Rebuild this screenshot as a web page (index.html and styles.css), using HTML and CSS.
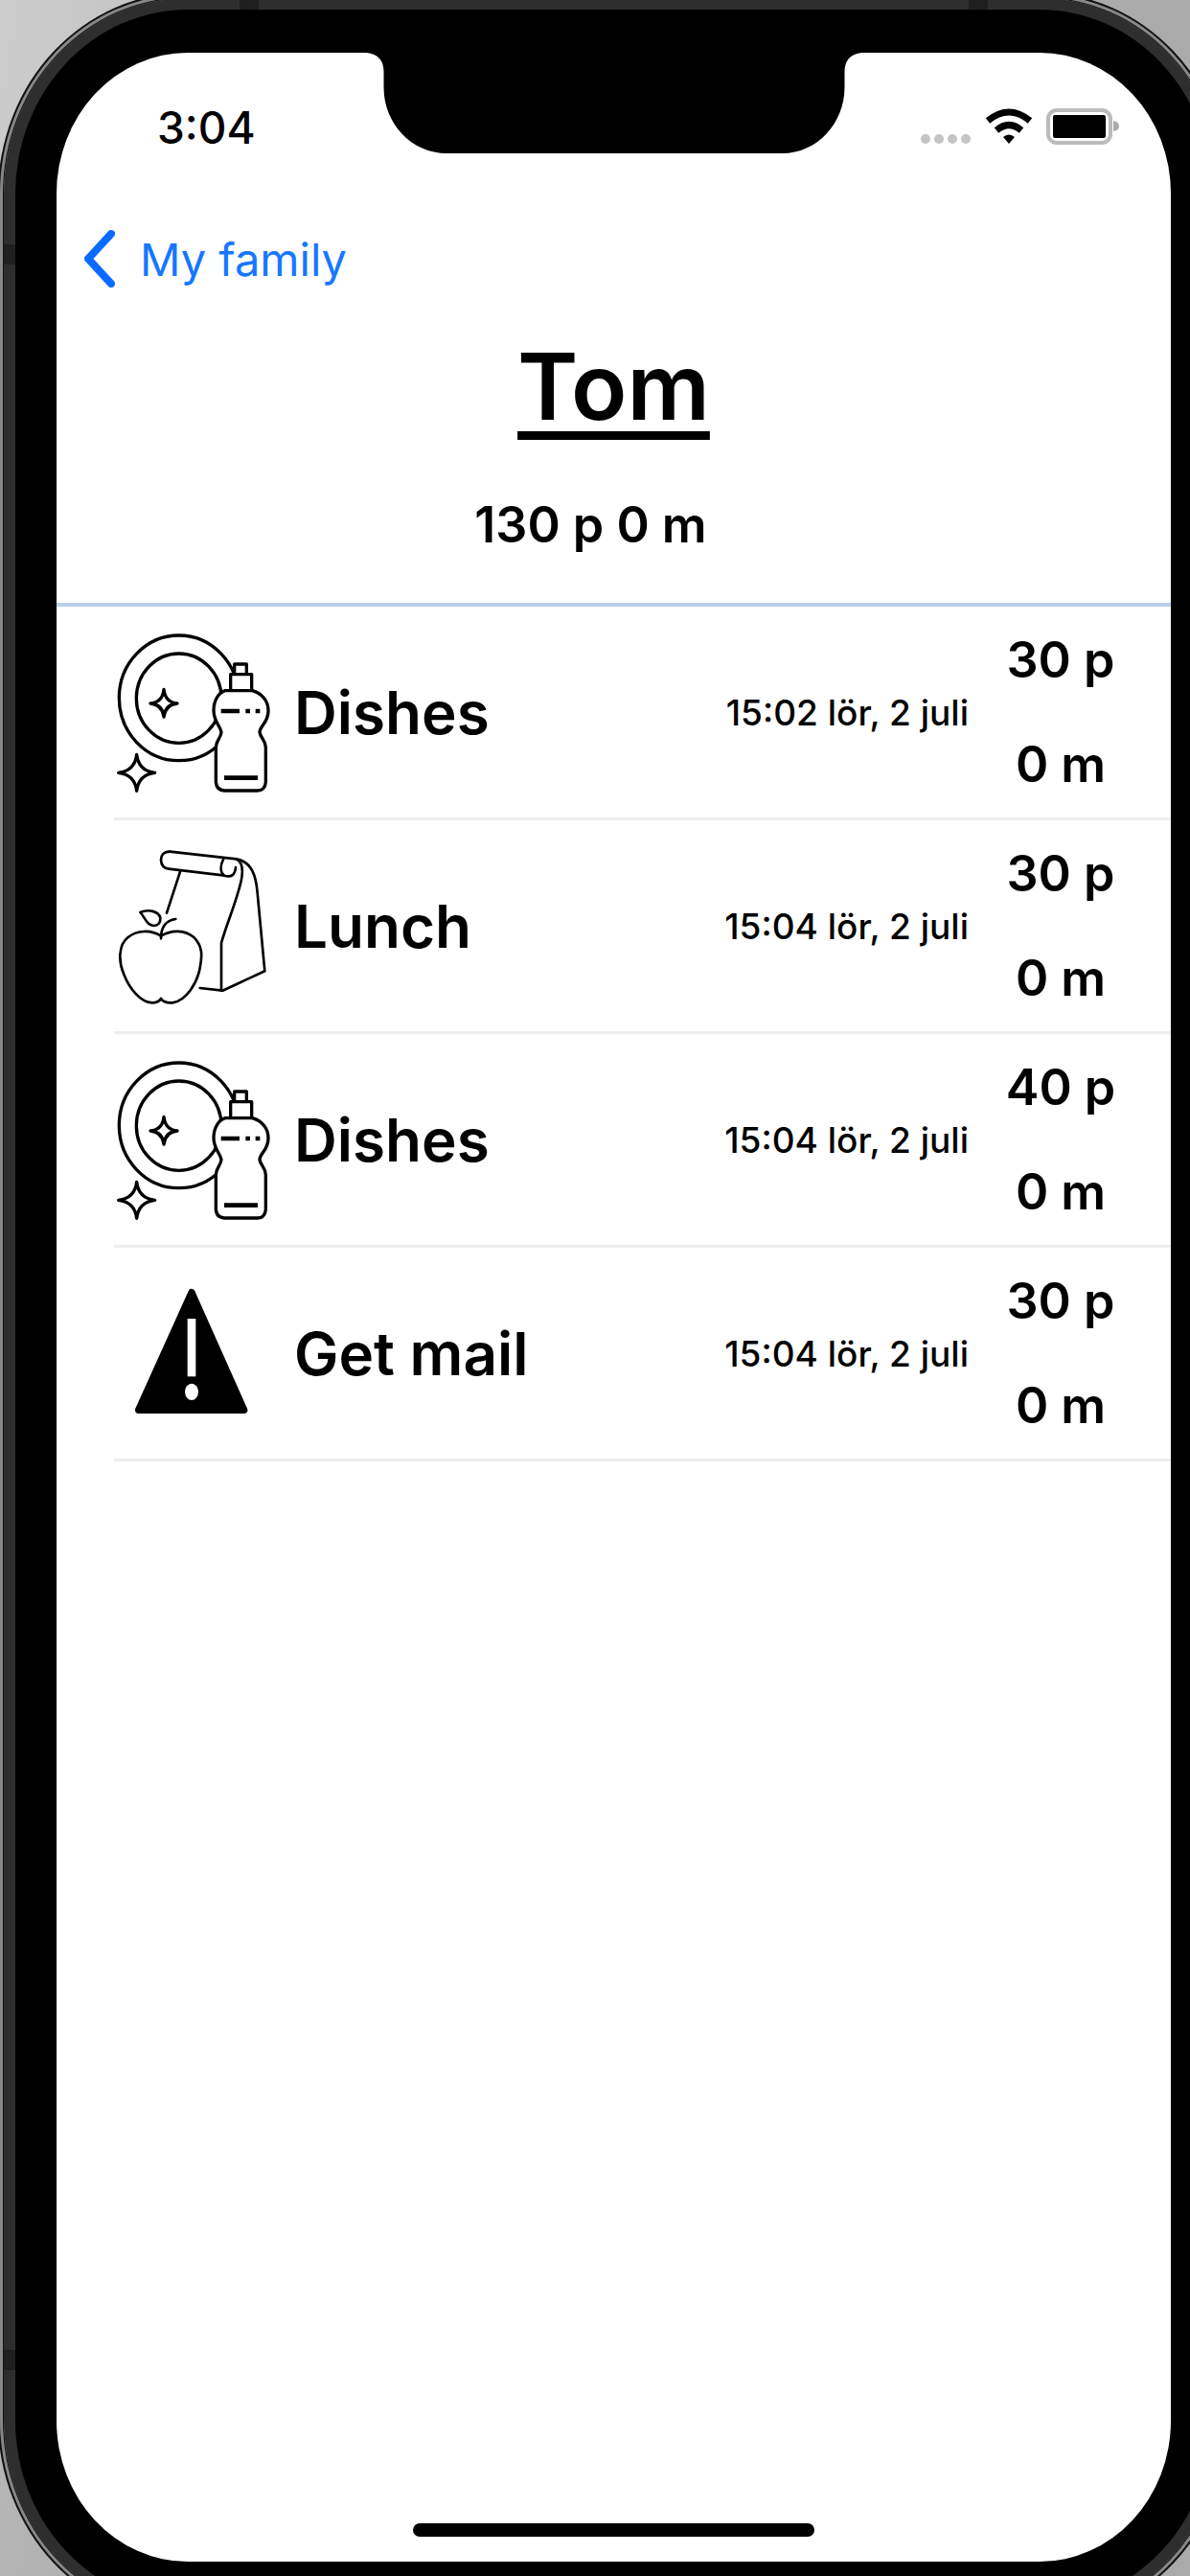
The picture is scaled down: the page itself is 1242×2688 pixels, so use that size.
FILE: index.html
```html
<!DOCTYPE html>
<html lang="en">
<head>
  <meta charset="UTF-8">
  <meta name="viewport" content="width=device-width, initial-scale=1.0">
  <title>My family - Tom</title>
  <link rel="stylesheet" href="styles.css">
</head>
<body>
  <!-- shared drawings for the chore list -->
  <svg class="sprite" aria-hidden="true">
    <symbol id="icon-dishes" viewBox="57 99 492 540">
      <g fill="#fff" stroke="#000" stroke-width="10" stroke-linejoin="round">
        <ellipse cx="260" cy="325" rx="187" ry="196"/>
        <ellipse cx="260" cy="326" rx="133" ry="140"/>
        <path d="M213 298Q217 338 255 342Q217 346 213 384Q209 346 171 342Q209 338 213 298Z"/>
        <path d="M128 502Q134 553 185 559Q134 565 128 616Q122 565 71 559Q122 553 128 502Z"/>
        <rect x="434" y="219" width="38" height="33"/>
        <rect x="422" y="251" width="66" height="52"/>
        <path d="M405 302H490C518 310 540 332 540 365C540 402 514 412 513 432C515 450 531 455 532 480V588Q530 615 505 615H402Q378 613 376 588V480C377 455 392 450 393 432C390 412 369 400 369 364C369 332 385 308 405 302Z"/>
        <path d="M392 366H450M469 366H483M500 366H514" stroke-width="14"/>
        <path d="M402 575H507" stroke-width="14"/>
      </g>
    </symbol>
    <symbol id="icon-lunch" viewBox="57 48 492 540">
      <g fill="none" stroke="#000" stroke-width="8" stroke-linecap="round" stroke-linejoin="round">
        <path d="M232 86L440 109C490 118 502 165 506 215L529 460L397 521L326 513"/>
        <path d="M232 86C212 86 204 98 204 112C205 130 213 138 228 140L398 160"/>
        <path d="M265 146L222 278"/>
        <path d="M400 108C390 128 388 150 402 161C425 168 436 158 438 135"/>
        <path d="M440 109C458 118 462 145 455 178C440 245 410 310 393 372V521"/>
        <path d="M139 276C165 265 196 272 202 293C203 310 194 318 182 318C160 317 158 298 139 276Z"/>
        <path d="M250 297C222 301 204 320 204 358"/>
        <path d="M204 350C172 330 130 331 101 354C70 378 71 430 87 468C105 515 140 558 176 559C191 559 199 555 204 546C210 556 222 560 240 559C285 552 318 495 326 450C334 410 334 382 308 355C278 330 238 330 204 350Z"/>
      </g>
    </symbol>
    <symbol id="icon-warning" viewBox="57 66 492 540">
      <path d="M300 146L464 514H134Z" stroke="#000" stroke-width="22" stroke-linejoin="round"/>
      <path d="M287 228H313V409H287Z" fill="#fff"/>
      <ellipse cx="300" cy="457" rx="21" ry="26" fill="#fff"/>
    </symbol>
  </svg>

  <div class="stage">
    <div class="phone">
      <main class="screen">
        <svg class="notch" viewBox="0 0 517 105" aria-hidden="true">
          <path d="M0 0H517Q499 2 499 20V36C499 74 470 105 434 105H84C47 105 18 74 18 36V20Q18 2 0 0Z"/>
        </svg>

        <div class="status">
          <span class="time">3:04</span>
          <svg class="status-icons" width="208" height="42" viewBox="0 0 208 42" aria-hidden="true">
            <g fill="#c4c4c4">
              <circle cx="5" cy="33" r="5"/>
              <circle cx="19" cy="33" r="5"/>
              <circle cx="33" cy="33" r="5"/>
              <circle cx="47" cy="33" r="5"/>
            </g>
            <g fill="none" stroke="#000" stroke-width="7">
              <path d="M70 14Q92 -4 114 14"/>
              <path d="M79 24Q92 13 105 24"/>
            </g>
            <path d="M86 31Q92 26 98 31L92 38Z"/>
            <rect x="133" y="3" width="65" height="34" rx="9" fill="#fff" stroke="#bbb" stroke-width="4"/>
            <rect x="138" y="8" width="55" height="24" rx="2"/>
            <path d="M201 14Q207 15 207 20Q207 24 201 25Z" fill="#aaa"/>
          </svg>
        </div>

        <nav class="nav">
          <a class="back" href="#">
            <svg width="32" height="60" viewBox="0 0 32 60" aria-hidden="true">
              <path d="M28 4L4 30L28 56" fill="none" stroke="#0a6cff" stroke-width="8" stroke-linecap="round"/>
            </svg>
            My family
          </a>
        </nav>

        <header class="person">
          <h1 class="name">Tom</h1>
          <p class="total">130 p 0 m</p>
        </header>

        <ul class="chores">
          <li class="chore">
            <svg class="icon"><use href="#icon-dishes"/></svg>
            <span class="title">Dishes</span>
            <span class="date">15:02 lör, 2 juli</span>
            <span class="amount"><span>30 p</span><span>0 m</span></span>
          </li>
          <li class="chore">
            <svg class="icon"><use href="#icon-lunch"/></svg>
            <span class="title">Lunch</span>
            <span class="date">15:04 lör, 2 juli</span>
            <span class="amount"><span>30 p</span><span>0 m</span></span>
          </li>
          <li class="chore">
            <svg class="icon"><use href="#icon-dishes"/></svg>
            <span class="title">Dishes</span>
            <span class="date">15:04 lör, 2 juli</span>
            <span class="amount"><span>40 p</span><span>0 m</span></span>
          </li>
          <li class="chore">
            <svg class="icon"><use href="#icon-warning"/></svg>
            <span class="title">Get mail</span>
            <span class="date">15:04 lör, 2 juli</span>
            <span class="amount"><span>30 p</span><span>0 m</span></span>
          </li>
        </ul>

        <div class="home-bar"></div>
      </main>
    </div>
  </div>
</body>
</html>
```
FILE: styles.css
```css
* {
  box-sizing: border-box;
}

body {
  margin: 0;
  font-family: Inter, "Liberation Sans", sans-serif;
  font-weight: 600;
  color: #000;
}

.sprite {
  display: none;
}

.stage {
  display: flex;
  height: 100vh;
  overflow: hidden;
  background: linear-gradient(100deg, #ccc, #aaa 40%, #aaa);
}

/* the case runs past the window on the right and at the bottom */
.phone {
  display: flex;
  flex: none;
  width: calc(100% + 31px);
  height: calc(100vh + 44px);
  margin: -2px 0 0 4px;
  padding: 45px 43px;
  border: 12px solid transparent;
  border-radius: 192px / 204px;
  background:
    linear-gradient(#000, #000) padding-box,
    linear-gradient(90deg, transparent 246px, #1f1f1f 246px, #1f1f1f 266px, transparent 266px, transparent calc(100% - 266px), #1f1f1f calc(100% - 266px), #1f1f1f calc(100% - 246px), transparent calc(100% - 246px)) border-box,
    linear-gradient(#2e2e2e 257px, #1f1f1f 257px, #1f1f1f 278px, #2e2e2e 278px, #2e2e2e calc(100% - 278px), #1f1f1f calc(100% - 278px), #1f1f1f calc(100% - 257px), #2e2e2e calc(100% - 257px)) border-box;
  box-shadow: 0 0 0 1px #111, 0 0 0 4px #888, 0 0 0 6px #111;
}

.screen {
  position: relative;
  display: flex;
  flex-direction: column;
  flex: 1;
  border-radius: 137px / 147px;
  background: #fff;
}

.notch {
  position: absolute;
  top: 0;
  left: 50%;
  width: 517px;
  transform: translateX(-50%);
}

.status {
  display: flex;
  justify-content: space-between;
  align-items: center;
  height: 156px;
  padding: 0 53px 0 105px;
}

.time {
  font-size: 46px;
  font-weight: 500;
}

.nav {
  display: flex;
  align-items: center;
  height: 118px;
  padding-left: 29px;
}

.back {
  display: flex;
  align-items: center;
  gap: 26px;
  font-size: 47px;
  font-weight: 400;
  color: #1677ff;
  text-decoration: none;
}

.person {
  padding: 14px 0 51px;
  border-bottom: 4px solid #bccfea;
  text-align: center;
}

.name {
  margin: 0;
  font-size: 96px;
  font-weight: 600;
  line-height: 120px;
  text-decoration: underline;
  text-decoration-thickness: 9px;
  text-underline-offset: 12px;
}

.total {
  margin: 55px 0 0;
  padding-right: 48px;
  font-size: 52px;
  line-height: 60px;
}

.chores {
  margin: 0 0 0 60px;
  padding: 0;
  list-style: none;
}

.chore {
  display: flex;
  align-items: center;
  height: 223px;
  padding-right: 59px;
  border-bottom: 3px solid #eee;
}

.icon {
  width: 164px;
  height: 180px;
  margin-right: 24px;
}

.title {
  flex: 1;
  font-size: 62px;
}

.date {
  font-size: 37px;
  font-weight: 500;
}

.amount {
  display: flex;
  flex-direction: column;
  align-items: center;
  width: 112px;
  margin-left: 40px;
  font-size: 52px;
  line-height: 109px;
  white-space: nowrap;
}

.home-bar {
  width: 36%;
  height: 14px;
  margin: auto auto 26px;
  border-radius: 7px;
  background: #000;
}
```
